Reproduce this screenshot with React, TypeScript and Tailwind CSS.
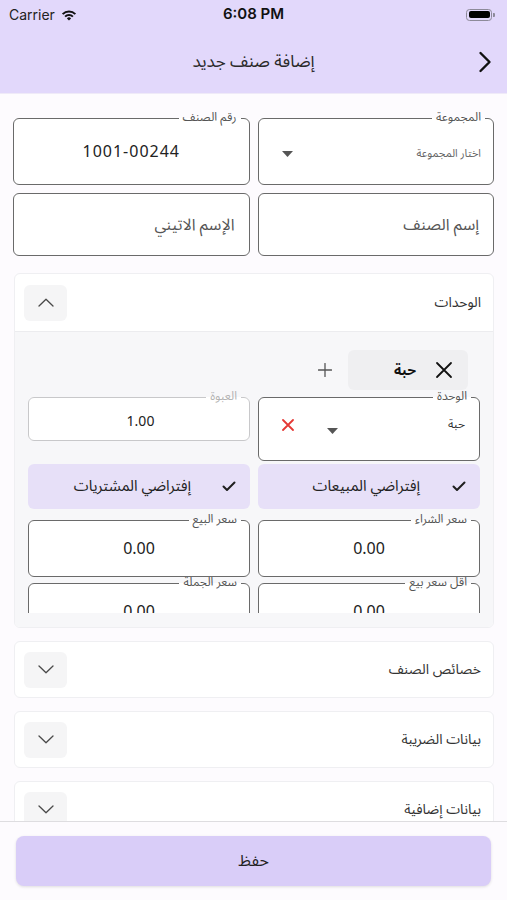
import React from "react";

const ChevronUp = () => (
  <svg width="16" height="9" viewBox="0 0 16 9" fill="none">
    <path d="M1 8L8 1.2L15 8" stroke="#4a4a4a" strokeWidth="1.3" strokeLinecap="round" strokeLinejoin="round" />
  </svg>
);
const ChevronDown = () => (
  <svg width="16" height="9" viewBox="0 0 16 9" fill="none">
    <path d="M1 1L8 7.8L15 1" stroke="#4a4a4a" strokeWidth="1.3" strokeLinecap="round" strokeLinejoin="round" />
  </svg>
);
const Check = () => (
  <svg width="14" height="11" viewBox="0 0 14 11" fill="none">
    <path d="M1.5 5.5L5 9L12.5 1.5" stroke="#1f1f1f" strokeWidth="2" strokeLinecap="round" strokeLinejoin="round" />
  </svg>
);
const Triangle = () => (
  <svg width="11" height="6" viewBox="0 0 11 6">
    <path d="M0 0H11L5.5 6Z" fill="#555" />
  </svg>
);

function Field({
  label,
  children,
  h,
  light,
}: {
  label: string;
  children?: React.ReactNode;
  h: string;
  light?: boolean;
}) {
  return (
    <fieldset
      className={
        "rounded-[6px] bg-white " +
        (light ? "border border-[#c8c8ca]" : "border-[1.5px] border-[#6a6a6a]")
      }
    >
      <legend
        className={
          "ms-[8px] px-[4px] text-[12px] leading-[12px] " + (light ? "text-[#b3b3b3]" : "text-[#555]")
        }
      >
        {label}
      </legend>
      <div className={h + " flex"}>{children}</div>
    </fieldset>
  );
}

function Card({ title, open, children }: { title: string; open?: boolean; children?: React.ReactNode }) {
  return (
    <div className="ml-[1px] rounded-[6px] border border-[#efeff2] bg-white overflow-hidden shrink-0">
      <div
        className={
          (open ? "h-[57px]" : "h-[55px]") + " flex items-center justify-between pr-[12px] pl-[9px]"
        }
      >
        <span className="text-[14px] text-[#333]">{title}</span>
        <div className="w-[43px] h-[36px] rounded-[6px] bg-[#f5f5f6] flex items-center justify-center">
          {open ? <ChevronUp /> : <ChevronDown />}
        </div>
      </div>
      {open && <div className="border-t border-[#ececef] bg-[#f7f7f9]">{children}</div>}
    </div>
  );
}

export default function App() {
  return (
    <div
      dir="rtl"
      className="w-[507px] h-[900px] flex flex-col bg-[#fdfbfe] overflow-hidden text-[#333] font-['Noto_Sans_Arabic','Noto_Sans','DejaVu_Sans',sans-serif]"
    >
      {/* header */}
      <div className="bg-[#e2d8fb] border-b border-[#efeaf8] shrink-0">
        <div dir="ltr" className="h-[29px] flex items-center justify-between px-[9px] font-['Inter',sans-serif]">
          <div className="flex items-center gap-[6px] w-[120px]">
            <span className="text-[14px] text-[#222]">Carrier</span>
            <svg width="16" height="12" viewBox="0 0 16 12" fill="#111">
              <path d="M8 11.5L5.88 9.38A3 3 0 0 1 10.12 9.38Z" />
              <path d="M4.82 8.32A4.5 4.5 0 0 1 11.18 8.32L12.6 6.9A6.5 6.5 0 0 0 3.4 6.9Z" />
              <path d="M2.34 5.84A8 8 0 0 1 13.66 5.84L15.07 4.43A10 10 0 0 0 0.93 4.43Z" />
            </svg>
          </div>
          <span className="text-[15px] font-semibold text-[#111]">6:08 PM</span>
          <div className="w-[120px] flex justify-end items-center pr-[3px]">
            <div className="w-[26px] h-[12px] rounded-[3.5px] border border-[#8d8a99] p-[1.5px]">
              <div className="w-full h-full rounded-[2px] bg-black" />
            </div>
            <div className="w-[1.5px] h-[4px] rounded-r-[1px] bg-[#8d8a99] ml-[1px]" />
          </div>
        </div>
        <div className="h-[64px] flex items-center relative">
          <div className="w-[44px] flex justify-center items-center pt-[2px]">
            <svg width="14" height="22" viewBox="0 0 14 22" fill="none">
              <path d="M2.5 2L11.5 11L2.5 20" stroke="#111" strokeWidth="2.4" strokeLinecap="round" strokeLinejoin="round" />
            </svg>
          </div>
          <div className="flex-1 text-center text-[17px] text-[#2a2a2a] pt-[4px] pl-[44px]">إضافة صنف جديد</div>
        </div>
      </div>

      {/* body */}
      <div className="flex-1 overflow-hidden px-[13px] pt-[18px] flex flex-col">
        <div className="grid grid-cols-2 gap-x-[8px]">
          <Field label="المجموعة" h="h-[60px]">
            <div className="flex-1 flex items-center justify-between pr-[12px] pl-[23px]">
              <span className="text-[11px] text-[#666]">اختار المجموعة</span>
              <Triangle />
            </div>
          </Field>
          <Field label="رقم الصنف" h="h-[58px]">
            <div className="flex-1 flex items-center justify-center text-[16px] text-[#222] tracking-[1px] pb-[2px]">
              1001-00244
            </div>
          </Field>
        </div>
        <div className="grid grid-cols-2 gap-x-[8px] mt-[8px]">
          <div className="h-[63px] rounded-[6px] border-[1.5px] border-[#6a6a6a] bg-white flex items-center pr-[14px]">
            <span className="text-[16px] text-[#555]">إسم الصنف</span>
          </div>
          <div className="h-[63px] rounded-[6px] border-[1.5px] border-[#6a6a6a] bg-white flex items-center pr-[14px]">
            <span className="text-[16px] text-[#555]">الإسم الاتيني</span>
          </div>
        </div>

        <div className="mt-[17px] flex flex-col gap-[13px]">
          <Card title="الوحدات" open>
            <div className="px-[13px] pt-[18px] pb-[14px]">
              <div className="h-[263px] overflow-hidden flex flex-col">
                <div className="flex items-center shrink-0">
                  <div className="mr-[12px] w-[120px] h-[40px] rounded-[6px] bg-[#efeff1] flex items-center pr-[15px] gap-[19px]">
                    <svg width="18" height="18" viewBox="0 0 18 18" fill="none">
                      <path d="M2 2L16 16M16 2L2 16" stroke="#111" strokeWidth="1.8" strokeLinecap="round" />
                    </svg>
                    <span className="text-[14px] font-bold text-[#111]">حبة</span>
                  </div>
                  <div className="mr-[16px]">
                    <svg width="14" height="14" viewBox="0 0 14 14" fill="none">
                      <path d="M7 0.5V13.5M0.5 7H13.5" stroke="#555" strokeWidth="1.3" strokeLinecap="round" />
                    </svg>
                  </div>
                </div>
                <div className="grid grid-cols-2 gap-x-[8px] items-start mt-[1px] shrink-0">
                  <Field label="الوحدة" h="h-[57px]">
                    <div className="flex-1 flex items-start pr-[14px] pl-[23px]">
                      <span className="text-[12px] text-[#333] mt-[13px]">حبة</span>
                      <div className="flex-1" />
                      <div className="mt-[25px]">
                        <Triangle />
                      </div>
                      <div className="mt-[16px] mr-[33px]">
                        <svg width="12" height="12" viewBox="0 0 12 12" fill="none">
                          <path d="M1 1L11 11M11 1L1 11" stroke="#e53935" strokeWidth="1.8" strokeLinecap="round" />
                        </svg>
                      </div>
                    </div>
                  </Field>
                  <Field label="العبوة" h="h-[37px]" light>
                    <div className="flex-1 flex items-center justify-center text-[14px] text-[#222] pl-[3px]">1.00</div>
                  </Field>
                </div>
                <div className="grid grid-cols-2 gap-x-[8px] mt-[3px] shrink-0">
                  <div className="h-[45px] rounded-[6px] bg-[#e7e0f8] flex items-center pr-[14px] gap-[32px]">
                    <Check />
                    <span className="text-[15px] text-[#222]">إفتراضي المبيعات</span>
                  </div>
                  <div className="h-[45px] rounded-[6px] bg-[#e7e0f8] flex items-center pr-[14px] gap-[31px]">
                    <Check />
                    <span className="text-[15px] text-[#222]">إفتراضي المشتريات</span>
                  </div>
                </div>
                <div className="grid grid-cols-2 gap-x-[8px] mt-[5px] shrink-0">
                  <Field label="سعر الشراء" h="h-[50px]">
                    <div className="flex-1 flex items-center justify-center text-[16px] text-[#222] pb-[5px]">0.00</div>
                  </Field>
                  <Field label="سعر البيع" h="h-[50px]">
                    <div className="flex-1 flex items-center justify-center text-[16px] text-[#222] pb-[5px]">0.00</div>
                  </Field>
                </div>
                <div className="grid grid-cols-2 gap-x-[8px] shrink-0">
                  <Field label="اقل سعر بيع" h="h-[50px]">
                    <div className="flex-1 flex items-center justify-center text-[16px] text-[#222] pb-[5px]">0.00</div>
                  </Field>
                  <Field label="سعر الجملة" h="h-[50px]">
                    <div className="flex-1 flex items-center justify-center text-[16px] text-[#222] pb-[5px]">0.00</div>
                  </Field>
                </div>
              </div>
            </div>
          </Card>
          <Card title="خصائص الصنف" />
          <Card title="بيانات الضريبة" />
          <Card title="بيانات إضافية" />
        </div>
      </div>

      {/* footer */}
      <div className="h-[79px] shrink-0 border-t border-[#dedde0] bg-[#fdfbfe] px-[16px] pt-[14px]">
        <div className="h-[50px] rounded-[8px] bg-[#d9cdf8] shadow-[0_1px_3px_rgba(0,0,0,0.12)] flex items-center justify-center text-[16px] text-[#222]">
          حفظ
        </div>
      </div>
    </div>
  );
}
